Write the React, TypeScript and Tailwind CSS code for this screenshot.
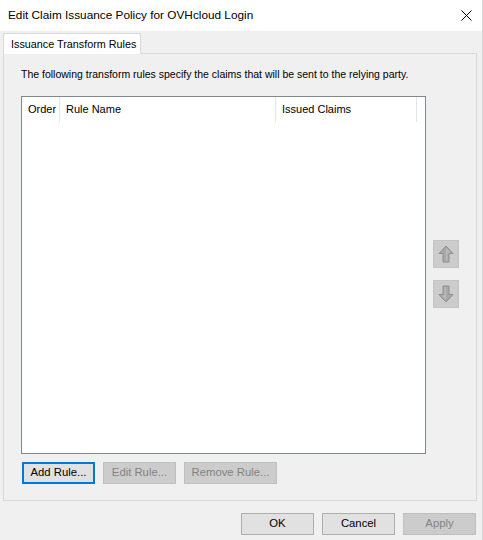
import React from "react";

const font = { fontFamily: '"Liberation Sans", Arial, sans-serif' };

function ArrowIcon({ down }: { down?: boolean }) {
  return (
    <svg width="16" height="18" viewBox="0 0 16 18" className={down ? "rotate-180" : ""}>
      <polygon
        points="8,1 15,8.5 11,8.5 11,17 5,17 5,8.5 1,8.5"
        fill="#a8a8a8"
        stroke="#8e8e8e"
        strokeWidth="1"
        strokeLinejoin="round"
      />
      <polygon points="8,3 12.5,7.5 9.5,7.5 9.5,16 8,16" fill="#bababa" />
    </svg>
  );
}

function Button({
  label,
  disabled,
  focused,
  className = "",
}: {
  label: string;
  disabled?: boolean;
  focused?: boolean;
  className?: string;
}) {
  return (
    <button
      className={`h-[22px] text-[11.3px] leading-none border ${
        disabled
          ? "bg-[#cccccc] border-[#bfbfbf] text-[#838383]"
          : focused
          ? "bg-[#e1e1e1] border-[#0078d7] border-2 text-black"
          : "bg-[#e1e1e1] border-[#adadad] text-black"
      } ${className}`}
    >
      {label}
    </button>
  );
}

export default function App() {
  return (
    <div className="w-[483px] h-[540px] flex flex-col bg-[#f0f0f0] border-r border-[#d6d6d6]" style={font}>
      {/* barra de título */}
      <div className="h-[31px] bg-white flex items-center justify-between pl-[8px] pr-[10px] shrink-0">
        <span className="text-[11.8px] text-black">Edit Claim Issuance Policy for OVHcloud Login</span>
        <svg width="11" height="11" viewBox="0 0 11 11">
          <path d="M0.5 0.5 L10.5 10.5 M10.5 0.5 L0.5 10.5" stroke="#000" strokeWidth="1" />
        </svg>
      </div>

      {/* abas */}
      <div className="pl-[3px] pr-[5px] pt-[2px] flex flex-col">
        <div className="flex">
          <div className="h-[21px] w-[138px] pl-[7px] bg-white border border-b-0 border-[#d9d9d9] text-[10.8px] flex items-center relative z-10 -mb-px">
            Issuance Transform Rules
          </div>
        </div>
        <div className="h-[448px] border border-[#d9d9d9] bg-[#f0f0f0] pl-[17px] pr-[17px] flex flex-col">
          <p className="text-[10.5px] text-black mt-[13px] leading-[14px]">
            The following transform rules specify the claims that will be sent to the relying party.
          </p>
          <div className="flex mt-[15px] gap-[7px]">
            <div className="w-[406px] h-[358px] border border-[#828790] bg-white">
              <div className="flex h-[25px] text-[11px] text-black">
                <div className="w-[38px] pl-[6px] flex items-center border-r border-[#e5e5e5]">Order</div>
                <div className="w-[216px] pl-[6px] flex items-center border-r border-[#e5e5e5]">Rule Name</div>
                <div className="w-[141px] pl-[6px] flex items-center border-r border-[#e5e5e5]">Issued Claims</div>
              </div>
            </div>
            <div className="flex flex-col gap-[12px] pt-[144px]">
              <div className="w-[26px] h-[28px] bg-[#cccccc] border border-[#c4c4c4] flex items-center justify-center">
                <ArrowIcon />
              </div>
              <div className="w-[26px] h-[28px] bg-[#cccccc] border border-[#c4c4c4] flex items-center justify-center">
                <ArrowIcon down />
              </div>
            </div>
          </div>
          <div className="flex gap-[8px] mt-[8px] pl-px">
            <Button label="Add Rule..." focused className="w-[73px]" />
            <Button label="Edit Rule..." disabled className="w-[73px]" />
            <Button label="Remove Rule..." disabled className="w-[93px]" />
          </div>
        </div>
      </div>

      {/* botões inferiores */}
      <div className="flex justify-end gap-[8px] pr-[6px] mt-[12px]">
        <Button label="OK" className="w-[73px]" />
        <Button label="Cancel" className="w-[73px]" />
        <Button label="Apply" disabled className="w-[73px]" />
      </div>
    </div>
  );
}
